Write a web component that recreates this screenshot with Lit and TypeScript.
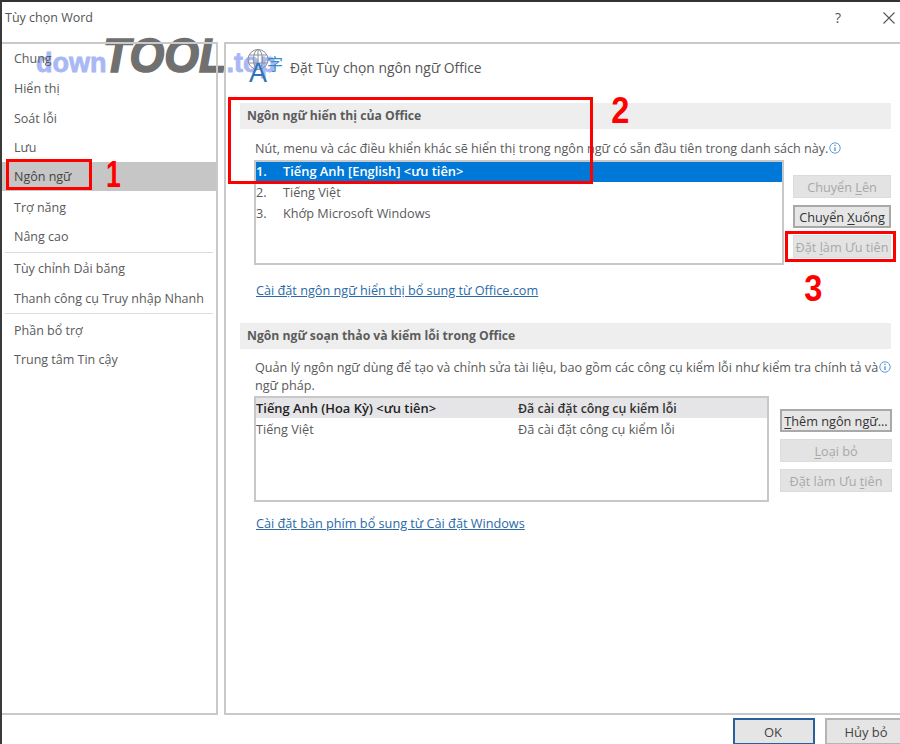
import { LitElement, html, css, svg } from "lit";
import { customElement } from "lit/decorators.js";

const info = svg`<svg class="info" width="12" height="12" viewBox="0 0 12 12"><circle cx="6" cy="6" r="5.2" fill="none" stroke="#5b9bd5" stroke-width="1"/><path d="M6 2.8v1.2M6 5.2V9" stroke="#2b7cd3" stroke-width="1.1" fill="none"/></svg>`;

@customElement("app-root")
export class AppRoot extends LitElement {
  static styles = css`
    :host { display: block; width: 900px; height: 744px; position: relative; overflow: hidden; background: #fff;
      font-family: "Open Sans", "Noto Sans", sans-serif; font-size: 12.5px; color: #5a5a5a; }
    * { box-sizing: border-box; }
    .dialog { position: relative; height: 744px; display: flex; flex-direction: column; border-top: 2px solid #333; border-left: 2px solid #3a3a3a; }
    .title { height: 40px; display: flex; align-items: center; padding: 0 8px 9px 3px; color: #555; font-size: 12.5px; flex: none; }
    .title .t { flex: 1; }
    .title .help { width: 12px; margin-right: 48px; font-size: 14px; text-align: center; color: #555; }
    .main { flex: 1; display: flex; gap: 6px; min-height: 0; }
    .side { width: 216px; border: 2px solid #c9c9c9; border-left: none; display: flex; flex-direction: column; }
    .side .it { height: 29.7px; display: flex; align-items: center; padding-left: 12px; white-space: nowrap; flex: none; }
    .side .it.sel { background: #c6c6c6; color: #444; margin: -1px 0 1.7px; height: 29px; padding-top: 1px; }
    .side .sep { height: 1px; background: #dcdcdc; margin: 0 3px 1px 3px; flex: none; }
    .panel { flex: 1; border: 2px solid #c9c9c9; border-right: none; padding: 0 9px 0 14px; display: flex; flex-direction: column; min-width: 0; }
    .head { height: 59px; display: flex; align-items: flex-start; gap: 7px; color: #555; font-size: 13.85px; flex: none; padding: 5px 0 0 7px; }
    .head span { line-height: 18px; margin-top: 10px; white-space: nowrap; }
    .sect { height: 26px; background: #eee; display: flex; align-items: center; padding: 0 0 2px 7px; font-weight: 700; font-size: 12.2px; color: #5c5c5c; flex: none; }
    .desc { padding-left: 15px; margin-top: 11px; line-height: 18px; white-space: nowrap; flex: none; font-size: 12.6px; }
    .info { vertical-align: -1px; margin-left: 1px; }
    .row { display: flex; flex: none; align-items: flex-start; }
    .list { border: 2px solid #c8c8c8; background: #fff; flex: none; }
    .l1 { width: 530px; height: 105px; margin-left: 14px; margin-top: 2px; }
    .l1 .li { height: 21px; display: flex; align-items: center; white-space: nowrap; font-size: 12.7px; }
    .l1 .li span:first-child { width: 27px; flex: none; }
    .l1 .li.sel { background: #0078d7; color: #fff; font-weight: 600; height: 20px; padding-bottom: 2px; font-size: 12.85px; }
    .l1 .sel + .li { margin-top: -1px; }
    .btns { display: flex; flex-direction: column; margin-left: 9px; gap: 7px; margin-top: 17px; }
    .btn { width: 98px; height: 23px; display: flex; align-items: center; justify-content: center; background: #e3e3e3; color: #a8a8a8; border: 1px solid #dcdcdc; white-space: nowrap; flex: none; font-size: 12.7px; }
    .btn.on { color: #333; background: #e6e6e6; border: 2px solid #a9a9a9; }
    .btn u { text-underline-offset: 2px; }
    .link { color: #2a6aa8; text-decoration: underline; margin-left: 16px; white-space: nowrap; flex: none; font-size: 12.7px; height: 19px; line-height: 19px; }
    .link.a { margin-top: 16px; }
    .sect.b { margin-top: 23px; }
    .desc.b { margin-top: 10px; line-height: 17.5px; font-size: 12.65px; }
    .l2 { width: 515px; height: 106px; margin-left: 14px; margin-top: 2px; }
    .l2 .li { height: 21px; display: flex; align-items: center; white-space: nowrap; font-size: 12.7px; }
    .l2 .li span:first-child { width: 262px; flex: none; }
    .l2 .li.sel { background: #e5e5e8; color: #222; font-weight: 600; height: 20px; font-size: 12.9px; }
    .l2 .li.sel span:last-child { font-weight: 600; color: #333; font-size: 12.4px; }
    .btns.b { margin-left: 11px; margin-top: 15px; }
    .btns.b .btn { width: 112px; padding-top: 1px; }
    .link.b { margin-top: 12px; }
    .foot { height: 29px; flex: none; display: flex; justify-content: flex-end; align-items: flex-start; gap: 10px; padding-top: 3px; }
    .foot .fb { width: 82px; height: 27px; display: flex; align-items: center; justify-content: center; background: #e5e5e5; color: #444; border: 2px solid #b5b5b5; flex: none; font-size: 13px; }
    .foot .fb.ok { border-color: #2a5f9e; padding-right: 2px; }
    .foot .fb.no { margin-right: -7px; }
    .mark { position: absolute; border: 3px solid #f00; pointer-events: none; }
    .m1 { left: 6px; top: 159px; width: 86px; height: 31px; }
    .m2 { left: 228px; top: 97px; width: 365px; height: 87px; }
    .m3 { left: 785px; top: 231px; width: 111px; height: 31px; }
    .num { position: absolute; color: #f00; font-family: "Liberation Sans", sans-serif; font-weight: 700; font-size: 37px; line-height: 37px; transform: scaleX(.88); }
    .n1 { left: 103px; top: 156px; transform: scaleX(.72); }
    .n2 { left: 610px; top: 92px; }
    .n3 { left: 803px; top: 270px; }
    .wm { position: absolute; display: flex; align-items: baseline; left: 36px; top: 28px; white-space: nowrap; font-family: "Liberation Sans", sans-serif; font-weight: 700; }
    .wm .a { color: #a9b8f5; font-size: 27px; -webkit-text-stroke: .8px #a9b8f5; }
    .wm .b { color: #707070; font-size: 48px; font-style: italic; -webkit-text-stroke: 1.6px #707070; margin-left: -3px; width: 120px; display: inline-block; transform: scaleX(.93); transform-origin: left; }
    .wm .c { color: #a9b8f5; font-size: 27px; -webkit-text-stroke: .8px #a9b8f5; margin-left: 3px; }
    .x { position: absolute; left: 883px; top: 12px; }
    .lang { flex: none; overflow: visible; }
    .lang .la { font-family: "Liberation Sans", sans-serif; font-size: 27px; fill: #2f74b8; }
    .lang .zi { font-family: "Noto Sans CJK SC", sans-serif; font-size: 16px; fill: #3a8cc8; }
  `;

  render() {
    return html`
      <div class="wm"><span class="a">down</span><span class="b">TOOL</span><span class="c">.top</span></div>
      <div class="dialog">
        <div class="title"><span class="t">Tùy chọn Word</span><span class="help">?</span></div>
        <div class="main">
          <div class="side">
            <div class="it">Chung</div>
            <div class="it">Hiển thị</div>
            <div class="it">Soát lỗi</div>
            <div class="it">Lưu</div>
            <div class="it sel">Ngôn ngữ</div>
            <div class="it">Trợ năng</div>
            <div class="it">Nâng cao</div>
            <div class="sep"></div>
            <div class="it">Tùy chỉnh Dải băng</div>
            <div class="it">Thanh công cụ Truy nhập Nhanh</div>
            <div class="sep"></div>
            <div class="it">Phần bổ trợ</div>
            <div class="it">Trung tâm Tin cậy</div>
          </div>
          <div class="panel">
            <div class="head">
              <svg class="lang" width="36" height="34" viewBox="0 0 36 34">
                <g fill="none" stroke="#8a8f96" stroke-width="1">
                  <circle cx="11" cy="10.5" r="10"/><ellipse cx="11" cy="10.5" rx="4.5" ry="10"/><path d="M2 6h18M2 14h18M11 .5v13"/>
                </g>
                <text class="la" x="2" y="33">A</text>
                <text class="zi" x="20" y="21">字</text>
              </svg>
              <span>Đặt Tùy chọn ngôn ngữ Office</span>
            </div>
            <div class="sect">Ngôn ngữ hiển thị của Office</div>
            <div class="desc">Nút, menu và các điều khiển khác sẽ hiển thị trong ngôn ngữ có sẵn đầu tiên trong danh sách này.${info}</div>
            <div class="row">
              <div class="list l1">
                <div class="li sel"><span>1.</span><span>Tiếng Anh [English] &lt;ưu tiên&gt;</span></div>
                <div class="li"><span>2.</span><span>Tiếng Việt</span></div>
                <div class="li"><span>3.</span><span>Khớp Microsoft Windows</span></div>
              </div>
              <div class="btns">
                <div class="btn"><span>Chuyển <u>L</u>ên</span></div>
                <div class="btn on"><span>Chuyển <u>X</u>uống</span></div>
                <div class="btn"><span>Đặt <u>l</u>àm Ưu tiên</span></div>
              </div>
            </div>
            <div class="link a">Cài đặt ngôn ngữ hiển thị bổ sung từ Office.com</div>
            <div class="sect b">Ngôn ngữ soạn thảo và kiểm lỗi trong Office</div>
            <div class="desc b">Quản lý ngôn ngữ dùng để tạo và chỉnh sửa tài liệu, bao gồm các công cụ kiểm lỗi như kiểm tra chính tả và${info}<br>ngữ pháp.</div>
            <div class="row">
              <div class="list l2">
                <div class="li sel"><span>Tiếng Anh (Hoa Kỳ) &lt;ưu tiên&gt;</span><span>Đã cài đặt công cụ kiểm lỗi</span></div>
                <div class="li"><span>Tiếng Việt</span><span>Đã cài đặt công cụ kiểm lỗi</span></div>
              </div>
              <div class="btns b">
                <div class="btn on"><span><u>T</u>hêm ngôn ngữ...</span></div>
                <div class="btn"><span><u>L</u>oại bỏ</span></div>
                <div class="btn"><span>Đặt làm Ưu <u>t</u>iên</span></div>
              </div>
            </div>
            <div class="link b">Cài đặt bàn phím bổ sung từ Cài đặt Windows</div>
          </div>
        </div>
        <div class="foot"><div class="fb ok">OK</div><div class="fb no">Hủy bỏ</div></div>
      </div>
      <svg class="x" width="12" height="12" viewBox="0 0 12 12"><path d="M.5.5l11 11M11.5.5l-11 11" stroke="#555" stroke-width="1.1" fill="none"/></svg>
      <div class="mark m1"></div>
      <div class="mark m2"></div>
      <div class="mark m3"></div>
      <div class="num n1">1</div>
      <div class="num n2">2</div>
      <div class="num n3">3</div>
    `;
  }
}
